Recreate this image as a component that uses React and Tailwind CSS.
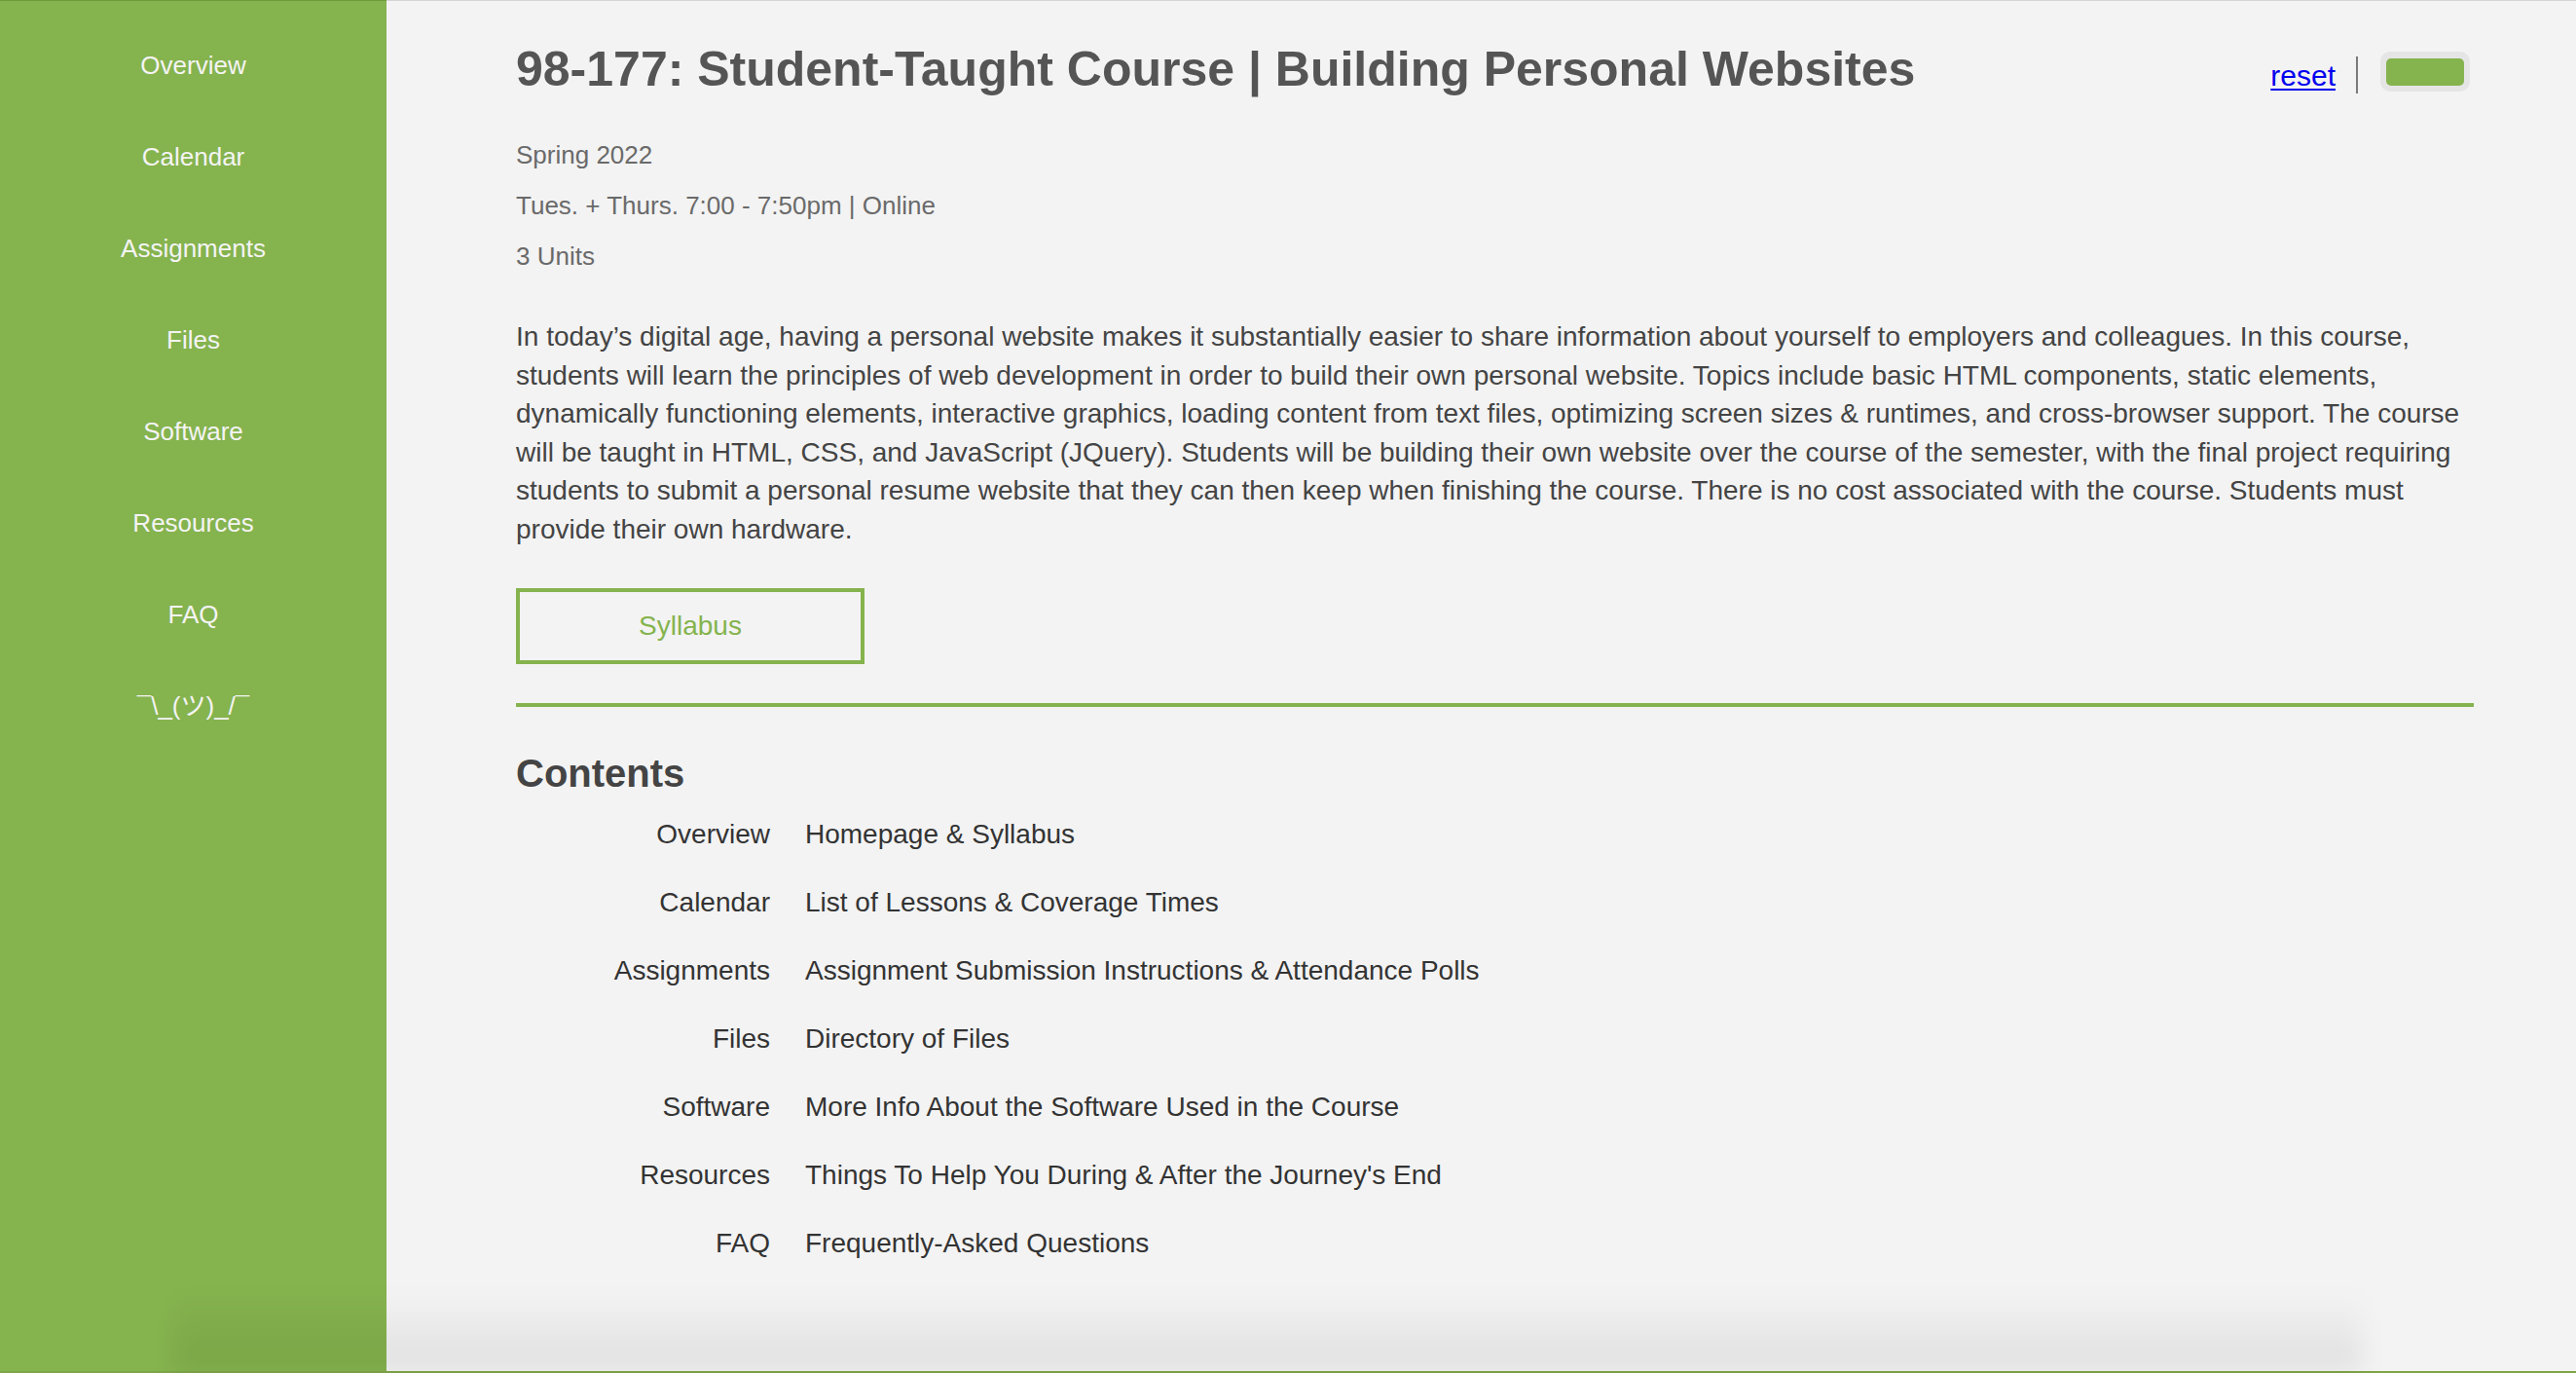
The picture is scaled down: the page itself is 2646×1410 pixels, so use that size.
import React from 'react'

const navItems = ['Overview', 'Calendar', 'Assignments', 'Files', 'Software', 'Resources', 'FAQ', '¯\\_(ツ)_/¯']

const contents = [
  ['Overview', 'Homepage & Syllabus'],
  ['Calendar', 'List of Lessons & Coverage Times'],
  ['Assignments', 'Assignment Submission Instructions & Attendance Polls'],
  ['Files', 'Directory of Files'],
  ['Software', 'More Info About the Software Used in the Course'],
  ['Resources', "Things To Help You During & After the Journey's End"],
  ['FAQ', 'Frequently-Asked Questions'],
]

export default function App() {
  return (
    <div className="relative flex h-[1410px] w-full flex-col overflow-hidden bg-[#f2f2f2] font-['Liberation_Sans','Noto_Sans_CJK_JP',sans-serif]">
      <div className="flex min-h-0 flex-1">
        {/* sidebar */}
        <nav className="flex w-[397px] shrink-0 flex-col items-center border-t border-[#6f9c3b] bg-[#85b34e] pt-[19px]">
          {navItems.map((item) => (
            <a key={item} className="text-[26px] leading-[94px] text-[#f4f4f4]">
              {item}
            </a>
          ))}
        </nav>

        {/* main */}
        <main className="flex-1 border-t border-[#d4d4d4] bg-[#f3f3f3] pl-[133px] pr-[105px]">
          <div className="flex items-start justify-between">
            <h1 className="pt-[40px] text-[50px] font-bold leading-[60px] text-[#555555]">
              98-177: Student-Taught Course | Building Personal Websites
            </h1>
            <div className="mt-[52px] mr-[4px] flex items-center">
              <a className="relative top-[4px] text-[30px] leading-[34px] text-[#0000ee] underline decoration-[2px] underline-offset-[3px]">reset</a>
              <div className="relative top-[3px] ml-[21px] mr-[23px] h-[38px] w-[2px] bg-[#7a7a7a]" />
              <div className="flex h-[41px] w-[92px] items-center justify-center rounded-[10px] bg-[#e5e5e5]">
                <div className="h-[28px] w-[80px] rounded-[5px] bg-[#85b34e]" />
              </div>
            </div>
          </div>

          <div className="mt-[32px] text-[26px] leading-[52px] text-[#6a6a6a]">
            <p>Spring 2022</p>
            <p>Tues. + Thurs. 7:00 - 7:50pm | Online</p>
            <p>3 Units</p>
          </div>

          <p className="mt-[37px] text-[28px] leading-[39.5px] text-[#444444]">
            In today’s digital age, having a personal website makes it substantially easier to share information about yourself to employers and colleagues. In this course, students will learn the principles of web development in order to build their own personal website. Topics include basic HTML components, static elements, dynamically functioning elements, interactive graphics, loading content from text files, optimizing screen sizes &amp; runtimes, and cross-browser support. The course will be taught in HTML, CSS, and JavaScript (JQuery). Students will be building their own website over the course of the semester, with the final project requiring students to submit a personal resume website that they can then keep when finishing the course. There is no cost associated with the course. Students must provide their own hardware.
          </p>

          <button className="mt-[41px] flex h-[78px] w-[358px] items-center justify-center border-4 border-[#85b34e] text-[28px] text-[#85b34e]">
            Syllabus
          </button>

          <hr className="mt-[40px] h-[4px] border-0 bg-[#85b34e]" />

          <h2 className="mt-[44px] text-[40px] font-bold leading-[48px] text-[#444444]">Contents</h2>

          <div className="grid grid-cols-[261px_1fr] gap-x-[36px] pt-[4px] text-[28px] leading-[70px] text-[#333333]">
            {contents.map(([label, desc]) => (
              <React.Fragment key={label}>
                <span className="text-right">{label}</span>
                <span>{desc}</span>
              </React.Fragment>
            ))}
          </div>
        </main>
      </div>

      <div className="h-[2px] w-full bg-[#7ea548]" />

      {/* window shadow at the bottom */}
      <div className="pointer-events-none absolute bottom-[2px] left-[180px] right-[220px] h-[80px] bg-gradient-to-b from-transparent to-black/[0.08] blur-md" />
    </div>
  )
}
